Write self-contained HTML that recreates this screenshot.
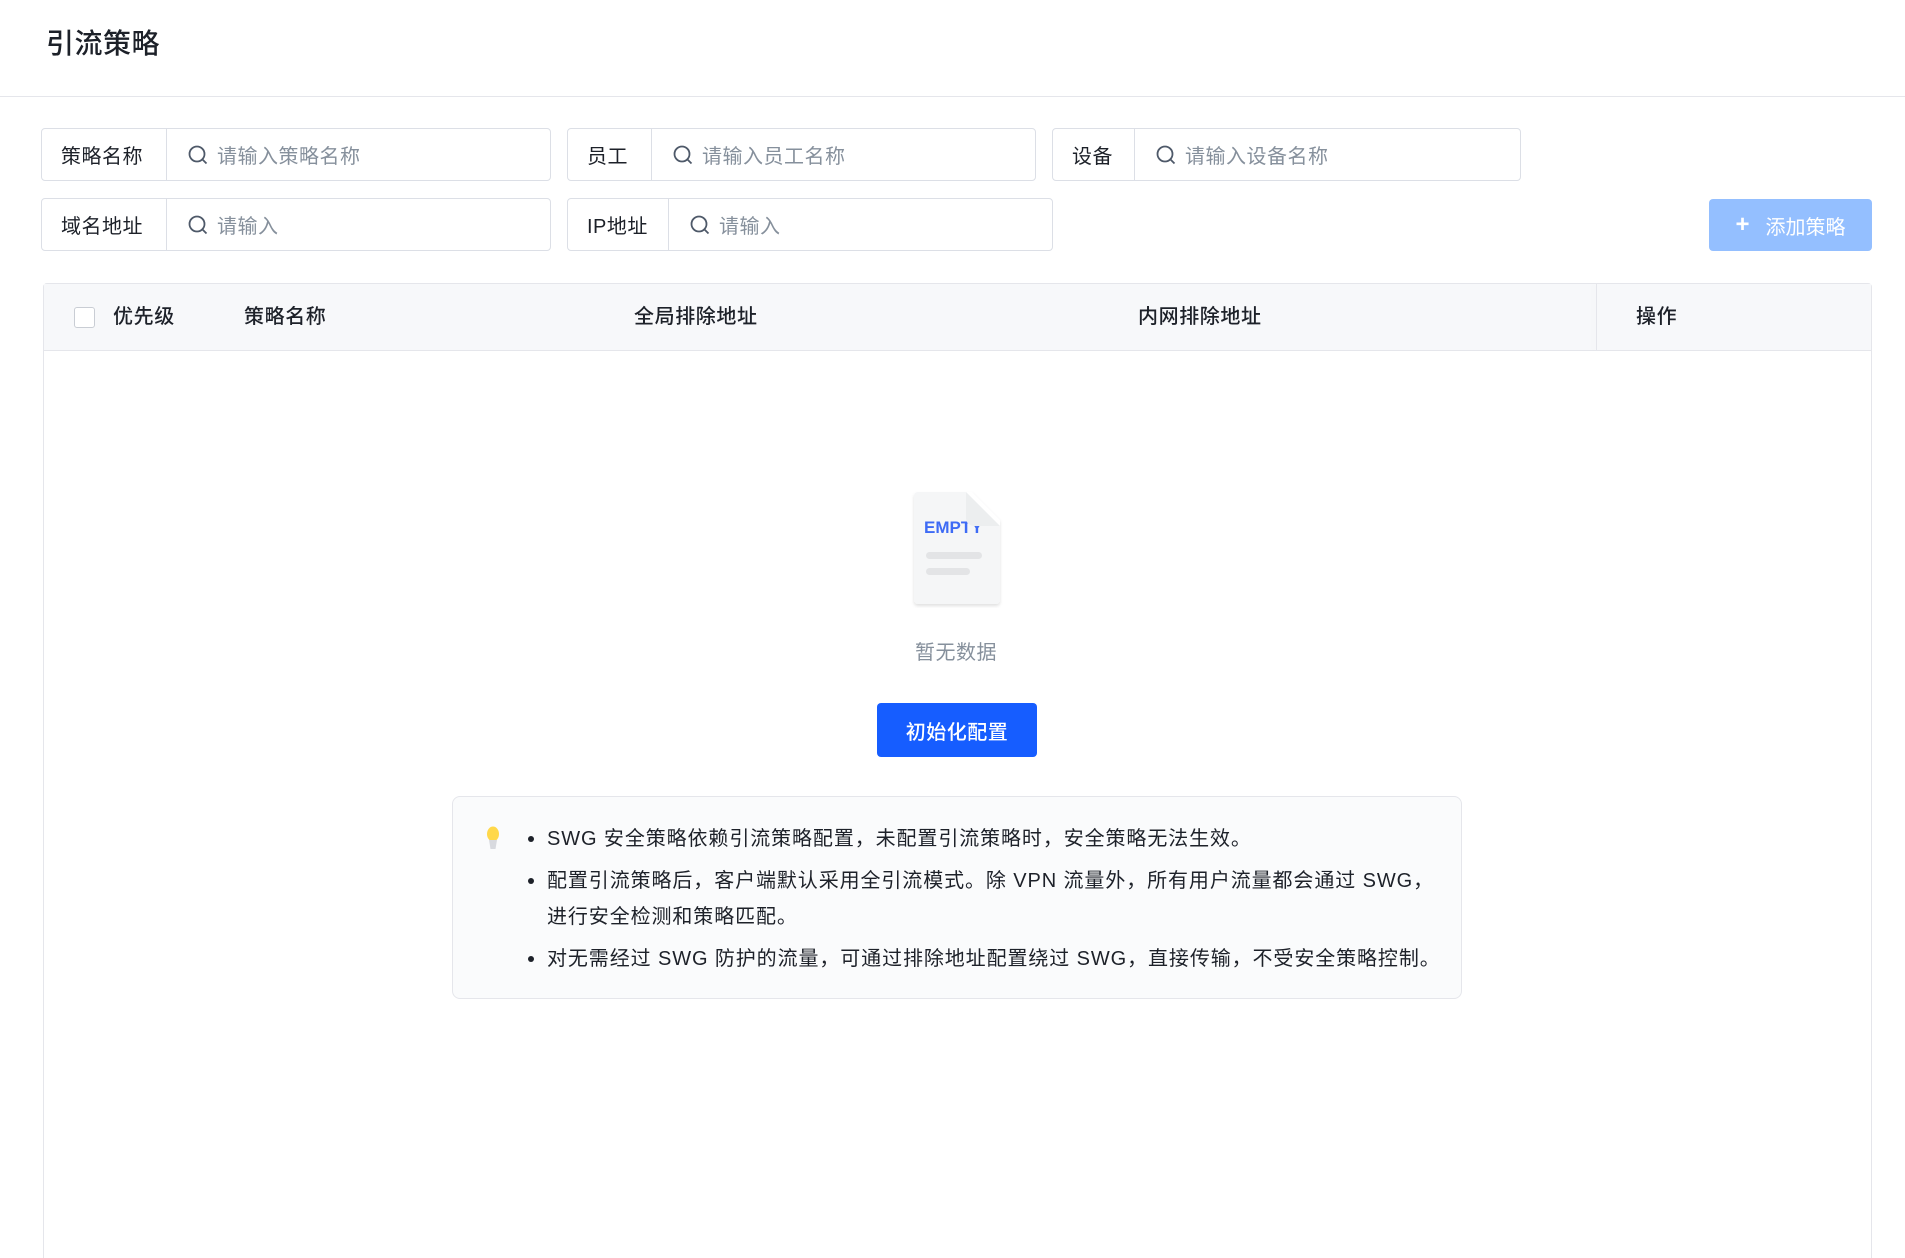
<!DOCTYPE html>
<html><head><meta charset="utf-8"><style>
*{box-sizing:border-box;margin:0;padding:0}
html{width:1905px;height:1258px;overflow:hidden}
body{width:1905px;height:1258px;background:#fff;font-family:"Liberation Sans","Noto Sans CJK SC",sans-serif;color:#1d2129;position:relative;overflow:hidden}
.abs{position:absolute}
.title{left:46px;top:26px;font-size:28px;font-weight:500;line-height:36px;letter-spacing:0.5px}
.hr{left:0;top:96px;width:1905px;height:1px;background:#e5e6eb}
.inp{position:absolute;height:53px;border:1px solid #dcdfe6;border-radius:4px;display:flex;align-items:center;font-size:20px;letter-spacing:0.5px;background:#fff}
.inp .lab{height:100%;display:flex;align-items:center;padding-left:19px;border-right:1px solid #dcdfe6;color:#1d2129}
.inp .ph{display:flex;align-items:center;color:#86909c;padding-left:20px}
.inp svg{margin-right:8px}
.btnadd{left:1709px;top:199px;width:163px;height:52px;background:#94bfff;border-radius:4px;color:#fff;font-size:20px;display:flex;align-items:center;justify-content:center}
.table{left:43px;top:283px;width:1829px;height:985px;border:1px solid #e5e6eb;border-radius:4px}
.th{left:44px;top:284px;width:1827px;height:67px;background:#f7f8fa;border-bottom:1px solid #e5e6eb}
.thtxt{top:300px;font-size:20px;font-weight:500;line-height:34px;letter-spacing:0.6px}
.cb{left:74px;top:307px;width:21px;height:21px;border:1px solid #c9cdd4;border-radius:3px;background:#fff}
.tip{left:452px;top:796px;width:1010px;height:203px;border:1px solid #e5e6eb;border-radius:8px;background:#fafbfc}
.ln{font-size:20px;line-height:26px;color:#1d2129;white-space:nowrap;letter-spacing:0.9px}
.dot{width:6px;height:6px;border-radius:3px;background:#1d2129}
</style></head><body>
<div class="abs title">引流策略</div>
<div class="abs hr"></div>

<div class="inp" style="left:41px;top:128px;width:510px"><div class="lab" style="width:125px">策略名称</div><div class="ph"><svg width="22" height="22" viewBox="0 0 22 22" fill="none" stroke="#4e5969" stroke-width="1.8"><circle cx="10" cy="10" r="7.5"/><path d="M15.5 15.5l4 4"/></svg>请输入策略名称</div></div>
<div class="inp" style="left:567px;top:128px;width:469px"><div class="lab" style="width:84px">员工</div><div class="ph"><svg width="22" height="22" viewBox="0 0 22 22" fill="none" stroke="#4e5969" stroke-width="1.8"><circle cx="10" cy="10" r="7.5"/><path d="M15.5 15.5l4 4"/></svg>请输入员工名称</div></div>
<div class="inp" style="left:1052px;top:128px;width:469px"><div class="lab" style="width:82px">设备</div><div class="ph"><svg width="22" height="22" viewBox="0 0 22 22" fill="none" stroke="#4e5969" stroke-width="1.8"><circle cx="10" cy="10" r="7.5"/><path d="M15.5 15.5l4 4"/></svg>请输入设备名称</div></div>
<div class="inp" style="left:41px;top:198px;width:510px"><div class="lab" style="width:125px">域名地址</div><div class="ph"><svg width="22" height="22" viewBox="0 0 22 22" fill="none" stroke="#4e5969" stroke-width="1.8"><circle cx="10" cy="10" r="7.5"/><path d="M15.5 15.5l4 4"/></svg>请输入</div></div>
<div class="inp" style="left:567px;top:198px;width:486px"><div class="lab" style="width:101px">IP地址</div><div class="ph"><svg width="22" height="22" viewBox="0 0 22 22" fill="none" stroke="#4e5969" stroke-width="1.8"><circle cx="10" cy="10" r="7.5"/><path d="M15.5 15.5l4 4"/></svg>请输入</div></div>
<div class="abs btnadd"><span style="font-size:24px;margin-right:16px;font-weight:bold">+</span>添加策略</div>

<div class="abs table"></div>
<div class="abs th"></div>
<div class="abs" style="left:1596px;top:284px;width:1px;height:67px;background:#e5e6eb;box-shadow:-3px 0 5px rgba(0,0,0,0.04)"></div>
<div class="abs cb"></div>
<div class="abs thtxt" style="left:113px">优先级</div>
<div class="abs thtxt" style="left:244px">策略名称</div>
<div class="abs thtxt" style="left:634px">全局排除地址</div>
<div class="abs thtxt" style="left:1138px">内网排除地址</div>
<div class="abs thtxt" style="left:1636px">操作</div>

<svg class="abs" style="left:908px;top:488px" width="96" height="120" viewBox="0 0 96 120">
<defs><filter id="s" x="-20%" y="-20%" width="140%" height="140%"><feDropShadow dx="0" dy="2" stdDeviation="1.5" flood-color="#000" flood-opacity="0.12"/></filter></defs>
<path d="M6 4h58l28 28v80a4 4 0 0 1-4 4H10a4 4 0 0 1-4-4V8a4 4 0 0 1 4-4z" fill="#f5f6f7" filter="url(#s)"/>
<text x="16" y="45" font-family="Liberation Sans" font-weight="bold" font-size="17" fill="#3e6bf5">EMPTY</text>
<path d="M58 4h6l28 28v6H66a8 8 0 0 1-8-8z" fill="#fff"/>
<path d="M58 4l34 34H66a8 8 0 0 1-8-8z" fill="#eceeef"/>
<rect x="18" y="64" width="56" height="7" rx="3.5" fill="#e3e4e6"/>
<rect x="18" y="80" width="44" height="7" rx="3.5" fill="#e3e4e6"/>
</svg>
<div class="abs" style="left:856px;top:636px;width:200px;text-align:center;font-size:20px;color:#86909c;letter-spacing:0.5px">暂无数据</div>
<div class="abs" style="left:877px;top:703px;width:160px;height:54px;background:#165dff;border-radius:4px;color:#fff;font-size:20px;font-weight:500;display:flex;align-items:center;justify-content:center;letter-spacing:0.5px">初始化配置</div>

<div class="abs tip"></div>
<svg class="abs" style="left:485px;top:826px" width="16" height="26" viewBox="0 0 16 26"><ellipse cx="8" cy="8" rx="6" ry="7.5" fill="#ffd84a"/><path d="M4 14h8l-1.5 9h-5z" fill="#d8dadf"/></svg>
<div class="abs dot" style="left:528px;top:836px"></div>
<div class="abs ln" style="left:547px;top:826px">SWG 安全策略依赖引流策略配置，未配置引流策略时，安全策略无法生效。</div>
<div class="abs dot" style="left:528px;top:878px"></div>
<div class="abs ln" style="left:547px;top:868px">配置引流策略后，客户端默认采用全引流模式。除 VPN 流量外，所有用户流量都会通过 SWG，</div>
<div class="abs ln" style="left:547px;top:904px">进行安全检测和策略匹配。</div>
<div class="abs dot" style="left:528px;top:956px"></div>
<div class="abs ln" style="left:547px;top:946px">对无需经过 SWG 防护的流量，可通过排除地址配置绕过 SWG，直接传输，不受安全策略控制。</div>
</body></html>
